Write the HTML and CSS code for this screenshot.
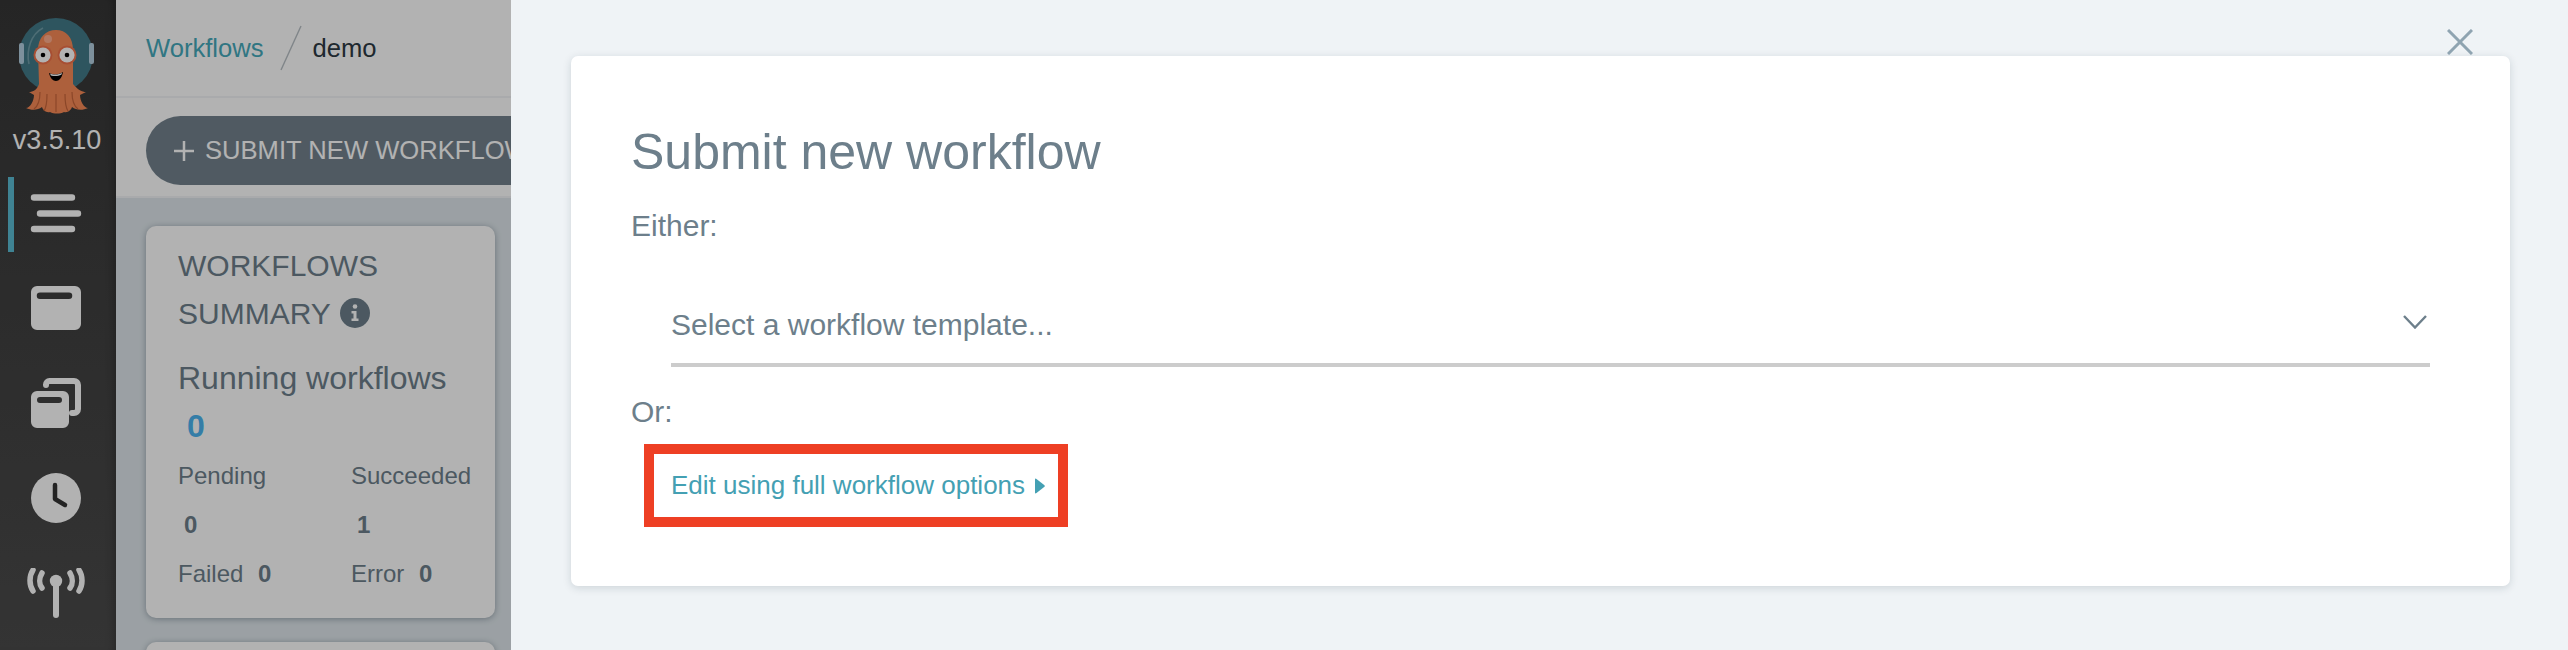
FILE: index.html
```html
<!DOCTYPE html>
<html lang="en">
<head>
    <meta charset="UTF-8">
    <title>Argo Workflows</title>
    <link rel="stylesheet" href="styles.css">
</head>
<body>
    <div class="app">
        <nav class="nav">
            <svg class="logo" width="80" height="100" viewBox="0 0 80 100">
                <circle cx="38" cy="39" r="37" fill="#437a88"/>
                <rect x="1" y="27" width="5" height="21" rx="2" fill="#b4cfe0"/>
                <rect x="71" y="27" width="5" height="21" rx="2" fill="#b4cfe0"/>
                <path d="M11 48C8 34 13 18 25 12" fill="none" stroke="#6f9da8" stroke-width="1.6"/>
                <path d="M20 34C20 21 28 14 38 14C48 14 55 21 55 34V68C60 74 64 76 68 76L62 79C62 85 66 92 70 92C64 95 58 94 54 91C53 94 50 97 46 96C42 98 36 98 32 96C28 97 25 94 24 91C20 94 14 95 8 92C12 92 16 85 16 79L11 76C15 76 19 74 21 68Z" fill="#f88a57"/>
                <path d="M22 76C22 84 20 90 16 93M29 78C29 86 28 92 26 95M38 78V96M47 78C47 86 48 92 50 95M54 76C54 84 56 90 60 93" fill="none" stroke="#c8653a" stroke-width="1.2"/>
                <circle cx="30" cy="23" r="4" fill="#ffae8d"/>
                <circle cx="25" cy="39" r="9.5" fill="#f0714a"/>
                <circle cx="49" cy="39" r="9.5" fill="#f0714a"/>
                <circle cx="25" cy="39" r="7.6" fill="#fff"/>
                <circle cx="49" cy="39" r="7.6" fill="#fff"/>
                <circle cx="25" cy="39" r="2.3" fill="#000"/>
                <circle cx="49" cy="39" r="2.3" fill="#000"/>
                <path d="M31 57C35 59 41 59 45 56C44 62 41 65 38 65C35 65 32 62 31 57Z" fill="#000"/>
                <path d="M32 57.5C35 59 41 59 44 56.8L43.4 58.8C40 60.4 36 60.4 32.8 59.4Z" fill="#fff"/>
            </svg>
            <div class="version">v3.5.10</div>
            <div class="nav-item active">
                <svg width="60" height="50" viewBox="0 0 60 50"><g fill="none" stroke="#fff" stroke-width="6.4" stroke-linecap="round"><path d="M8 9.500H46M14 25.500H52M8 41H46"/></g></svg>
            </div>
            <div class="nav-item">
                <svg width="60" height="50" viewBox="0 0 60 50"><path fill="#fff" fill-rule="evenodd" d="M11 3H49A6 6 0 0 1 55 9V41A6 6 0 0 1 49 47H11A6 6 0 0 1 5 41V9A6 6 0 0 1 11 3ZM14 9.500A3 3 0 0 0 14 16H43A3 3 0 0 0 43 9.500Z"/></svg>
            </div>
            <div class="nav-item">
                <svg width="60" height="50" viewBox="0 0 60 50">
                    <path fill="#fff" fill-rule="evenodd" d="M11 13H37A6 6 0 0 1 43 19V44A6 6 0 0 1 37 50H11A6 6 0 0 1 5 44V19A6 6 0 0 1 11 13ZM14 19A3 3 0 0 0 14 25H33A3 3 0 0 0 33 19Z"/>
                    <path fill="none" stroke="#fff" stroke-width="6" stroke-linecap="round" d="M20 7V6.500A3.500 3.500 0 0 1 23.500 3H48A4 4 0 0 1 52 7V31A4 4 0 0 1 48 35H46"/>
                </svg>
            </div>
            <div class="nav-item">
                <svg width="60" height="50" viewBox="0 0 60 50"><circle cx="30" cy="25" r="25" fill="#fff"/><path d="M29 12V26L39 32" fill="none" stroke="#333" stroke-width="4.500" stroke-linecap="round" stroke-linejoin="round"/></svg>
            </div>
            <div class="nav-item">
                <svg width="60" height="50" viewBox="0 0 60 50">
                    <circle cx="30" cy="13" r="6.200" fill="#fff"/>
                    <path d="M30 15V47" stroke="#fff" stroke-width="6" stroke-linecap="round"/>
                    <g fill="none" stroke="#fff" stroke-width="5.500" stroke-linecap="round">
                        <path d="M16 5C13 10 13 16 16 20M44 5C47 10 47 16 44 20"/>
                        <path d="M7 2C3 8 3 17 7 23M53 2C57 8 57 17 53 23"/>
                    </g>
                </svg>
            </div>
        </nav>

        <main class="main">
            <div class="top-bar">
                <a class="crumb">Workflows</a>
                <svg class="crumb-slash" width="22" height="46" viewBox="0 0 22 46"><path d="M21 1L1 45" stroke="#b8bfc4" stroke-width="1.4"/></svg>
                <span class="crumb-current">demo</span>
            </div>
            <div class="tool-bar">
                <button class="btn-submit">
                    <svg width="22" height="22" viewBox="0 0 22 22"><path d="M11 1V21M1 11H21" stroke="#fff" stroke-width="2.500"/></svg>
                    SUBMIT NEW WORKFLOW
                </button>
            </div>
            <div class="content">
                <div class="card">
                    <div class="card-title">WORKFLOWS<br>SUMMARY
                        <svg class="info" width="30" height="30" viewBox="0 0 30 30"><circle cx="15" cy="15" r="15" fill="#6d7f8b"/><circle cx="15" cy="8.500" r="2.300" fill="#fff"/><path d="M11.500 13H16.500V20.500H18.500V23H11.500V20.500H13.500V15.500H11.500Z" fill="#fff"/></svg>
                    </div>
                    <div class="running">Running workflows</div>
                    <div class="running-count">0</div>
                    <div class="stats">
                        <div class="stat-label">Pending</div>
                        <div class="stat-label">Succeeded</div>
                        <div class="stat-value">0</div>
                        <div class="stat-value succ">1</div>
                        <div class="stat-label">Failed <b>0</b></div>
                        <div class="stat-label">Error <b>0</b></div>
                    </div>
                </div>
                <div class="card card-next"></div>
            </div>
        </main>
    </div>

    <div class="backdrop"></div>

    <div class="panel">
        <svg class="panel-close" width="26" height="26" viewBox="0 0 26 26"><path d="M1 1L25 25M25 1L1 25" stroke="#8fa4b1" stroke-width="3"/></svg>
        <div class="panel-card">
            <h4 class="panel-title">Submit new workflow</h4>
            <div class="panel-text either">Either:</div>
            <div class="select">
                <span>Select a workflow template...</span>
                <svg width="24" height="14" viewBox="0 0 24 14"><path d="M1 1L12 12.500L23 1" fill="none" stroke="#6d7f8b" stroke-width="2.400"/></svg>
            </div>
            <div class="panel-text or">Or:</div>
            <a class="full-link">
                Edit using full workflow options
                <svg width="10" height="16" viewBox="0 0 10 16"><path d="M0 1.500Q0 0 1.500 1L9.500 7.200Q10 8 9.500 8.800L1.500 15Q0 16 0 14.500Z" fill="#44a0b3"/></svg>
            </a>
        </div>
    </div>
</body>
</html>
```
FILE: styles.css
```css
html, body {
    margin: 0;
    height: 100%;
    overflow: hidden;
}
body {
    font-family: "Liberation Sans", Arial, sans-serif;
    color: #6d7f8b;
    background-color: #dee6eb;
}
.app {
    display: flex;
    height: 650px;
    overflow: hidden;
}

/* left nav */
.nav {
    width: 116px;
    flex-shrink: 0;
    padding-top: 16px;
    box-sizing: border-box;
    background: linear-gradient(to bottom, #363636, #4b4b4b);
    box-shadow: inset -8px 0 8px -6px rgba(0, 0, 0, .25);
}
.logo {
    display: block;
    margin-left: 18px;
}
.version {
    color: #fff;
    font-size: 27px;
    line-height: 30px;
    text-align: center;
    margin-top: 9px;
    margin-bottom: 22px;
    margin-right: 2px;
}
.nav-item {
    height: 75px;
    box-sizing: border-box;
    margin: 0 0 20px 8px;
    padding: 0 0 3px 12px;
    border-left: 6px solid transparent;
    display: flex;
    align-items: center;
}
.nav-item.active {
    border-left-color: #5bbcd3;
}

/* page behind the panel */
.main {
    flex: 1;
    display: flex;
    flex-direction: column;
    min-width: 0;
}
.top-bar {
    height: 96px;
    flex-shrink: 0;
    background-color: #fff;
    border-bottom: 2px solid #f2f4f6;
    padding-left: 30px;
    display: flex;
    align-items: center;
    font-size: 25.6px;
}
.crumb {
    color: #45a9bb;
}
.crumb-slash {
    margin: 0 11px 0 16px;
}
.crumb-current {
    color: #2d3a44;
}
.tool-bar {
    height: 100px;
    flex-shrink: 0;
    background-color: #fff;
    border-bottom: 2px solid #f2f4f6;
    box-sizing: border-box;
    padding: 18px 0 0 30px;
}
.btn-submit {
    height: 69px;
    width: 560px;
    border: 0;
    border-radius: 35px;
    padding: 0 0 0 27px;
    background-color: #73828d;
    color: #fff;
    font-family: inherit;
    font-size: 25.6px;
    display: flex;
    align-items: center;
    gap: 10px;
    white-space: nowrap;
}
.content {
    flex: 1;
    min-height: 0;
    overflow: hidden;
    padding: 28px 0 0 30px;
}
.card {
    width: 349px;
    height: 392px;
    box-sizing: border-box;
    padding: 16px 0 0 32px;
    margin-bottom: 24px;
    background-color: #fff;
    border-radius: 10px;
    box-shadow: 0 1px 6px rgba(16, 38, 54, .35);
}
.card-title {
    font-size: 30px;
    line-height: 48px;
}
.info {
    vertical-align: -4px;
    margin-left: 1px;
}
.running {
    font-size: 32px;
    line-height: 44px;
    margin-top: 18px;
}
.running-count {
    color: #4bb4f0;
    font-size: 32px;
    font-weight: bold;
    line-height: 48px;
    padding-left: 9px;
    margin-top: 2px;
}
.stats {
    display: grid;
    grid-template-columns: 173px 173px;
    font-size: 24px;
    line-height: 48px;
    grid-auto-rows: 48px;
    row-gap: 1px;
    padding-top: 2px;
}
.stat-value {
    font-weight: bold;
    padding-left: 6px;
}
.stat-label b {
    margin-left: 8px;
}

/* dim layer and slide out panel */
.backdrop {
    position: absolute;
    inset: 0;
    background-color: rgba(0, 0, 0, .3);
}
.panel {
    position: absolute;
    top: 0;
    right: 0;
    bottom: 0;
    left: 511px;
    background-color: #eff3f6;
    padding: 56px 58px 0 60px;
}
.panel-close {
    position: absolute;
    top: 29px;
    left: 1936px;
}
.panel-card {
    height: 530px;
    box-sizing: border-box;
    padding: 64px 0 0 60px;
    background-color: #fff;
    border-radius: 7px;
    box-shadow: 0 2px 8px rgba(16, 38, 54, .15);
}
.panel-title {
    margin: 0;
    font-size: 50px;
    font-weight: normal;
    line-height: 64px;
}
.panel-text {
    font-size: 30px;
    line-height: 40px;
}
.either {
    margin-top: 22px;
}
.select {
    width: 1759px;
    height: 76px;
    margin: 41px 0 0 40px;
    border-bottom: 4px solid #ccc;
    display: flex;
    align-items: center;
    justify-content: space-between;
    font-size: 30px;
}
.select svg {
    margin-right: 3px;
    margin-bottom: 7px;
}
.or {
    margin-top: 25px;
}
.full-link {
    display: flex;
    align-items: center;
    justify-content: space-between;
    width: 374px;
    height: 63px;
    margin: 12px 0 0 13px;
    padding: 0 13px 0 17px;
    border: 10px solid #ee3f24;
    color: #44a0b3;
    font-size: 26px;
}
```
